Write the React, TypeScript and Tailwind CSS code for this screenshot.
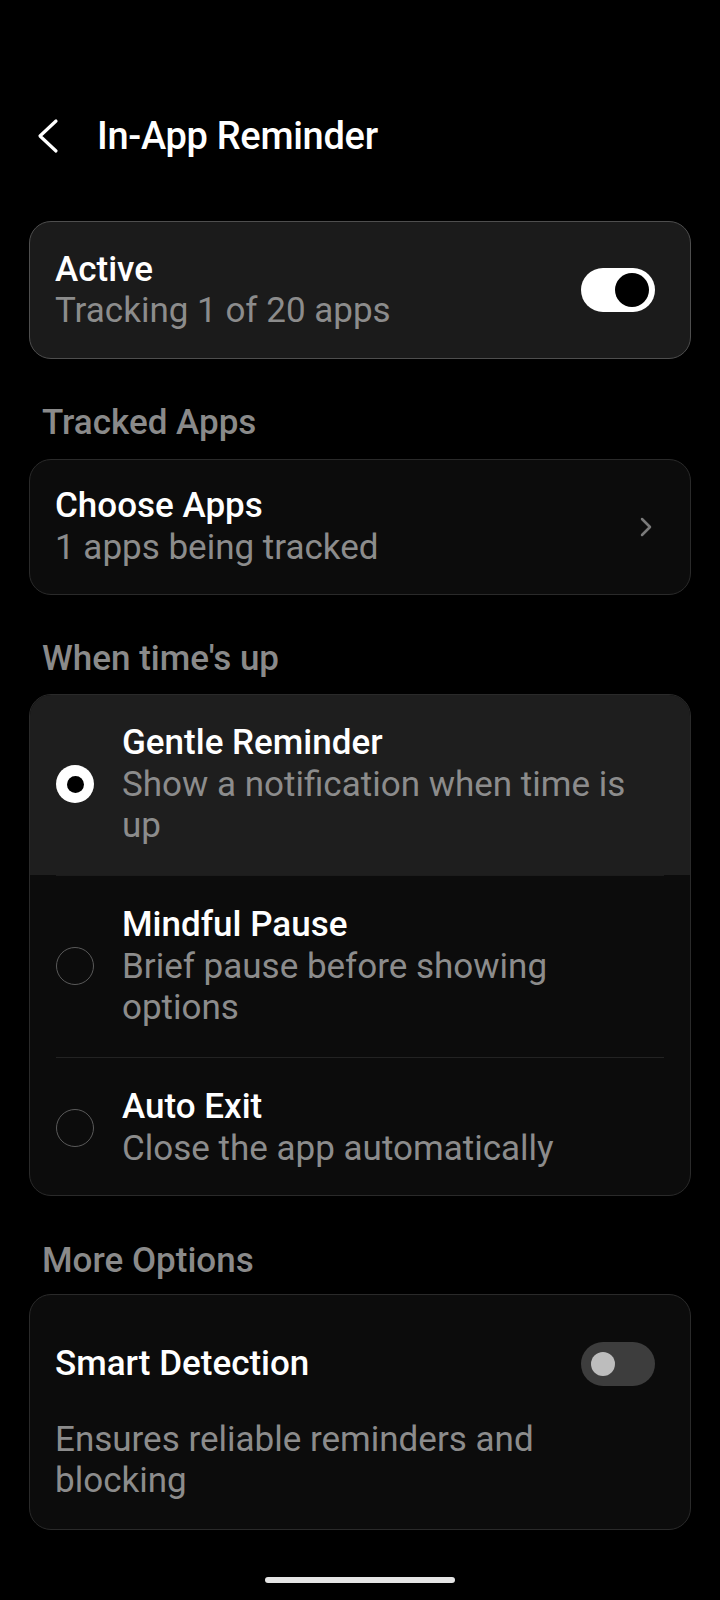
import React from "react";

const font = { fontFamily: "Roboto, 'Noto Sans', sans-serif" };

function Toggle({ on }: { on: boolean }) {
  if (on) {
    return (
      <div className="relative w-[74px] h-[44px] rounded-full bg-white shrink-0">
        <div className="absolute right-[6px] top-[5px] w-[34px] h-[34px] rounded-full bg-black" />
      </div>
    );
  }
  return (
    <div className="relative w-[74px] h-[44px] rounded-full bg-[#3d3d3d] shrink-0">
      <div className="absolute left-[10px] top-[10px] w-[24px] h-[24px] rounded-full bg-[#bdbdbd]" />
    </div>
  );
}

function Radio({ selected }: { selected: boolean }) {
  if (selected) {
    return (
      <div className="w-[38px] h-[38px] rounded-full bg-white flex items-center justify-center shrink-0">
        <div className="w-[17px] h-[17px] rounded-full bg-black" />
      </div>
    );
  }
  return <div className="w-[38px] h-[38px] rounded-full border-[1.5px] border-[#5a5a5a] shrink-0" />;
}

function Option({
  title,
  desc,
  selected,
  pad,
}: {
  title: string;
  desc: string[];
  selected: boolean;
  pad: string;
}) {
  return (
    <div className={`flex items-center px-[26px] ${pad} ${selected ? "bg-[#1e1e1e]" : ""}`}>
      <Radio selected={selected} />
      <div className="ml-[28px] flex flex-col">
        <div className="text-[35px] leading-[41.5px] font-medium text-white">{title}</div>
        {desc.map((d, i) => (
          <div key={i} className="text-[35px] leading-[41.5px] text-[#8c8c8c]">
            {d}
          </div>
        ))}
      </div>
    </div>
  );
}

export default function App() {
  return (
    <div className="w-[720px] h-[1600px] bg-black overflow-hidden flex flex-col" style={font}>
      {/* Header */}
      <div className="mt-[100px] h-[72px] flex items-center">
        <svg width="24" height="36" viewBox="0 0 24 36" className="ml-[37px]">
          <polyline
            points="19,3 3,18 19,33"
            fill="none"
            stroke="white"
            strokeWidth="3.2"
            strokeLinecap="round"
            strokeLinejoin="round"
          />
        </svg>
        <div className="ml-[36px] text-[38px] leading-[44px] font-medium text-white tracking-[-0.3px]">
          In-App Reminder
        </div>
      </div>

      {/* Active card */}
      <div className="mt-[49px] mx-[29px] h-[138px] rounded-[22px] border-[1.5px] border-[#4e4e4e] bg-[#1b1b1b] flex items-center justify-between pl-[25px] pr-[35px]">
        <div className="flex flex-col">
          <div className="text-[35px] leading-[41.5px] font-medium text-white">Active</div>
          <div className="text-[35px] leading-[41.5px] text-[#8c8c8c]">Tracking 1 of 20 apps</div>
        </div>
        <Toggle on />
      </div>

      {/* Tracked Apps */}
      <div className="mt-[43px] ml-[42px] text-[35px] leading-[41.5px] font-medium text-[#8a8a8a]">
        Tracked Apps
      </div>
      <div className="mt-[15px] mx-[29px] h-[136px] rounded-[22px] border-[1.5px] border-[#2a2a2a] bg-[#0c0c0c] flex items-center justify-between pl-[25px] pr-[37px]">
        <div className="flex flex-col">
          <div className="text-[35px] leading-[41.5px] font-medium text-white">Choose Apps</div>
          <div className="text-[35px] leading-[41.5px] text-[#8c8c8c]">1 apps being tracked</div>
        </div>
        <svg width="14" height="22" viewBox="0 0 14 22">
          <polyline
            points="3,3 11,11 3,19"
            fill="none"
            stroke="#7a7a7a"
            strokeWidth="2.5"
            strokeLinecap="round"
            strokeLinejoin="round"
          />
        </svg>
      </div>

      {/* When time's up */}
      <div className="mt-[43px] ml-[42px] text-[35px] leading-[41.5px] font-medium text-[#8a8a8a]">
        When time's up
      </div>
      <div className="mt-[15px] mx-[29px] rounded-[22px] border-[1.5px] border-[#2a2a2a] bg-[#0c0c0c] overflow-hidden flex flex-col">
        <Option
          selected
          pad="pt-[27px] pb-[28px]"
          title="Gentle Reminder"
          desc={["Show a notification when time is", "up"]}
        />
        <div className="h-[1.5px] mx-[26px] bg-[#1c1c1c]" />
        <Option
          selected={false}
          pad="pt-[28px] pb-[28px]"
          title="Mindful Pause"
          desc={["Brief pause before showing", "options"]}
        />
        <div className="h-[1.5px] mx-[26px] bg-[#232323]" />
        <Option
          selected={false}
          pad="pt-[28px] pb-[26px]"
          title="Auto Exit"
          desc={["Close the app automatically"]}
        />
      </div>

      {/* More Options */}
      <div className="mt-[44px] ml-[42px] text-[35px] leading-[41.5px] font-medium text-[#8a8a8a]">
        More Options
      </div>
      <div className="mt-[12px] mx-[29px] rounded-[22px] border-[1.5px] border-[#2a2a2a] bg-[#0c0c0c] pt-[47px] pb-[27px] pl-[25px] pr-[35px] flex flex-col">
        <div className="h-[44px] flex items-center justify-between">
          <div className="text-[35px] leading-[41.5px] font-medium text-white">Smart Detection</div>
          <Toggle on={false} />
        </div>
        <div className="mt-[33px] text-[35px] leading-[41.5px] text-[#8c8c8c]">
          Ensures reliable reminders and
          <br />
          blocking
        </div>
      </div>

      {/* Home indicator */}
      <div className="mt-auto mb-[17px] mx-auto w-[190px] h-[6px] rounded-full bg-[#e4e4e4]" />
    </div>
  );
}
